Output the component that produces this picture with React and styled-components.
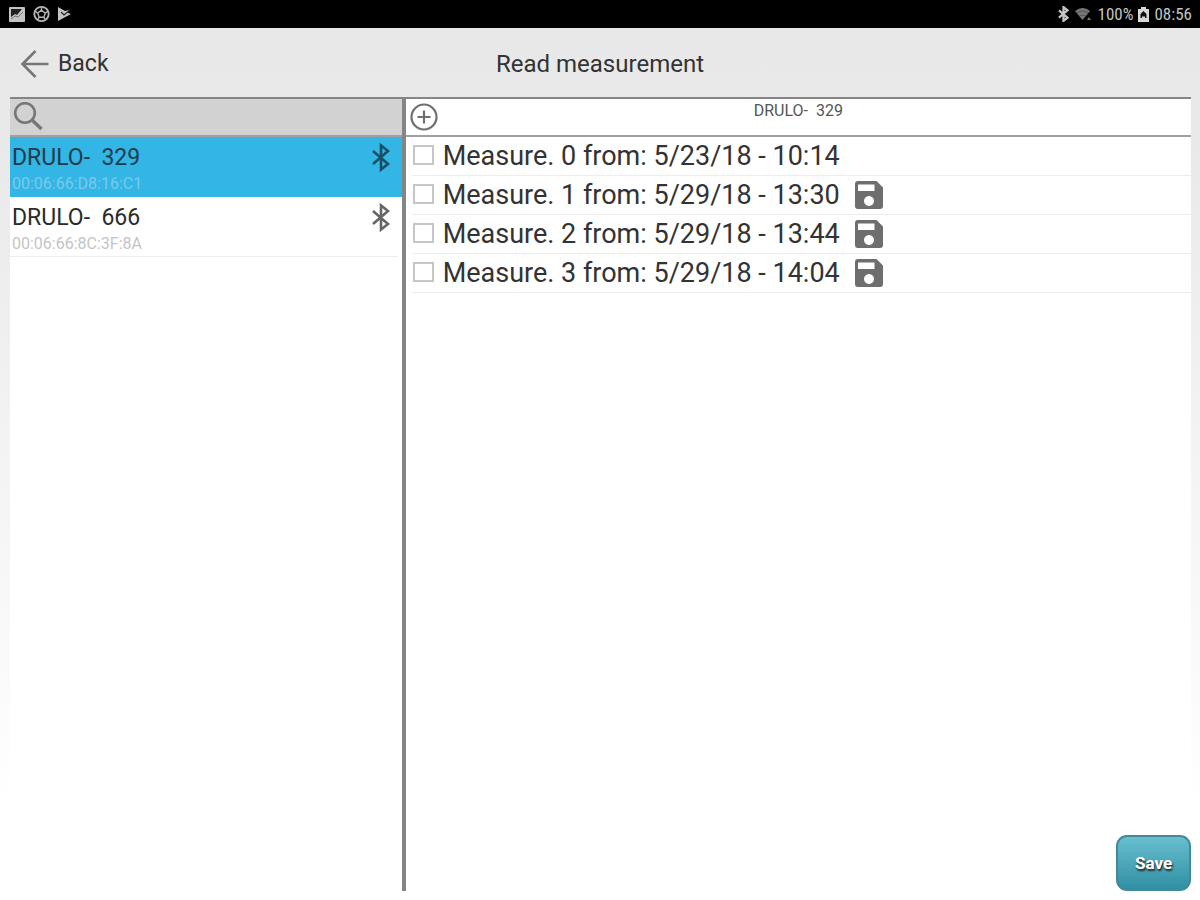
import React, { useState } from 'react';
import styled, { createGlobalStyle, css } from 'styled-components';

const GlobalStyle = createGlobalStyle`
  * {
    box-sizing: border-box;
  }

  body {
    margin: 0;
    font-family: Roboto, sans-serif;
    color: #333;
  }

  button,
  input {
    font-family: inherit;
  }
`;

const Screen = styled.div`
  display: flex;
  flex-direction: column;
  min-height: 100vh;
  background: linear-gradient(#e8e8e8 0, #e9e9e9 15%, #fff 90%);
`;

const StatusBar = styled.div`
  display: flex;
  justify-content: space-between;
  align-items: center;
  height: 28px;
  padding: 0 8px;
  background: #000;
  color: #c4c4c4;
`;

const StatusGroup = styled.div`
  display: flex;
  align-items: center;
  gap: ${props => props.$gap}px;
`;

const StatusText = styled.span`
  font-family: 'Roboto Condensed', Roboto, sans-serif;
  font-size: 17px;
  line-height: 28px;
`;

const Header = styled.header`
  display: grid;
  grid-template-columns: 1fr auto 1fr;
  align-items: center;
  height: 69px;
  padding: 2px 20px 0;
`;

const plainButton = css`
  padding: 0;
  border: 0;
  background: none;
  color: inherit;
  cursor: pointer;
`;

const BackButton = styled.button`
  ${plainButton};
  display: flex;
  align-items: center;
  gap: 9px;
  justify-self: start;
  font-size: 23px;
  line-height: 32px;
`;

const Title = styled.h1`
  margin: 0;
  font-size: 24px;
  font-weight: 400;
  line-height: 32px;
`;

const Panels = styled.main`
  display: flex;
  flex: 1;
  margin: 0 9px 9px 10px;
  background: #fff;
`;

const Devices = styled.section`
  flex: 0 0 calc(33.33% + 2px);
  border-right: 4px solid #858585;
`;

const Measurements = styled.section`
  display: flex;
  flex: 1;
  flex-direction: column;
`;

const bar = css`
  display: flex;
  height: 40px;
  border-top: 2px solid #858585;
  border-bottom: 2px solid #a0a0a0;
`;

const SearchBar = styled.label`
  ${bar};
  align-items: center;
  padding-left: 3px;
  background: #d2d2d2;
`;

const SearchInput = styled.input`
  flex: 1;
  min-width: 0;
  height: 32px;
  border: 0;
  outline: 0;
  background: transparent;
  font-size: 20px;
`;

const MeasureBar = styled.div`
  ${bar};
  padding-left: 4px;
`;

const AddButton = styled.button`
  ${plainButton};
  display: flex;
  align-items: center;
`;

const DeviceTitle = styled.h2`
  flex: 1;
  margin: 0;
  padding-right: 32px;
  color: #555;
  font-size: 16px;
  font-weight: 400;
  line-height: 23px;
  text-align: center;
  white-space: pre;
`;

const List = styled.ul`
  margin: 0;
  padding: 0;
  list-style: none;
`;

const DeviceItem = styled.li`
  margin-right: ${props => (props.$selected ? 0 : 4)}px;
  border-bottom: 1px solid ${props => (props.$selected ? '#33b5e5' : '#ececec')};
  background: ${props => (props.$selected ? '#33b5e5' : '#fff')};
`;

const DeviceButton = styled.button`
  ${plainButton};
  display: flex;
  justify-content: space-between;
  align-items: flex-start;
  width: 100%;
  height: 59px;
  padding: 5px ${props => (props.$selected ? 12 : 8)}px 0 2px;
  text-align: left;
  color: ${props => (props.$selected ? '#174f65' : '#666')};
`;

const DeviceName = styled.span`
  display: block;
  color: ${props => (props.$selected ? '#1d3d4b' : '#2b2b2b')};
  font-size: 23px;
  line-height: 31px;
  white-space: pre;
`;

const DeviceAddress = styled.span`
  display: block;
  color: ${props => (props.$selected ? '#7acbea' : '#c4c4c4')};
  font-size: 16px;
  line-height: 22px;
`;

const MeasureItem = styled.li`
  display: flex;
  align-items: center;
  gap: 15px;
  height: 39px;
  margin-left: 6px;
  border-bottom: 1px solid #ececec;
`;

const MeasureLabel = styled.label`
  display: flex;
  align-items: center;
  gap: 9px;
  font-size: 27px;
  line-height: 36px;
`;

const Checkbox = styled.input`
  appearance: none;
  width: 21px;
  height: 20px;
  margin: 0 0 2px 1px;
  border: 2px solid #c6c6c6;
  background: #fff;

  &:checked {
    background: #33b5e5;
  }
`;

const SaveButton = styled.button`
  align-self: flex-end;
  width: 75px;
  height: 56px;
  margin-top: auto;
  padding: 0;
  border: 2px solid #43899a;
  border-radius: 11px;
  background: linear-gradient(#67bfd0, #318fa3);
  color: #fff;
  font-size: 17px;
  font-weight: 700;
  text-shadow: 1px 2px 2px #222;
  cursor: pointer;
`;

const PictureIcon = () => (
  <svg width="18" height="17" viewBox="0 0 18 17" aria-hidden="true">
    <rect x="1" y="1" width="16" height="15" rx="1" fill="#c4c4c4" />
    <path d="M3 3h11L9 9 7 8l-4 3z" fill="#222" />
    <path d="M3 13l4-3 3 1 5-5" fill="none" stroke="#777" />
  </svg>
);

const BallIcon = () => (
  <svg width="17" height="18" viewBox="0 0 18 18" fill="none" stroke="#b4b4b4" aria-hidden="true">
    <circle cx="9" cy="9" r="7.600" strokeWidth="2" />
    <path d="M9 5l4 3-1.500 4.500h-5L5 8z" strokeWidth="1.500" />
    <path d="M9 5V2M13 8l3-2M11.500 12.500l2 3M6.500 12.500l-2 3M5 8L2 6" strokeWidth="1.500" />
  </svg>
);

const PlayIcon = () => (
  <svg width="15" height="16" viewBox="0 0 15 16" aria-hidden="true">
    <path d="M1 1l7 4 4-1-1 3 3 1L1 15z" fill="#c4c4c4" />
    <path d="M4 6l3 3 6-5" fill="none" stroke="#222" strokeWidth="1.200" />
  </svg>
);

const BluetoothIcon = ({ width, height, weight = 2.6 }) => (
  <svg width={width} height={height} viewBox="0 0 18 28" fill="none" stroke="currentColor" strokeWidth={weight} aria-hidden="true">
    <path d="M1 7.500L16 20.500L9 26V2L16 7.500L1 20.500" />
  </svg>
);

const WifiIcon = () => (
  <svg width="19" height="16" viewBox="0 0 19 16" aria-hidden="true">
    <path d="M1 5Q8.500-1 16 5L8.500 14z" fill="#777" />
    <path d="M3 7Q8.500 3 14 7M5.500 10Q8.500 8 11.500 10" fill="none" stroke="#444" strokeWidth="0.800" />
    <path d="M13 14l2-3 2 3z" fill="#777" />
  </svg>
);

const BatteryIcon = () => (
  <svg width="11" height="15" viewBox="0 0 11 15" aria-hidden="true">
    <path d="M3 0h5v2h3v13H0V2h3z" fill="#d8d8d8" />
    <path d="M5.500 4L8.500 7v4H7V9.500H4V11H2.500V7z" fill="#111" />
  </svg>
);

const ArrowIcon = () => (
  <svg width="29" height="28" viewBox="0 0 29 28" fill="none" stroke="#777" strokeWidth="2.600" aria-hidden="true">
    <path d="M15.500 1L2.500 14l13 13M2.500 14H28.500" />
  </svg>
);

const SearchIcon = () => (
  <svg width="30" height="30" viewBox="0 0 30 30" fill="none" stroke="#777" aria-hidden="true">
    <circle cx="12" cy="11" r="9.800" strokeWidth="2.600" />
    <path d="M19 18l9.500 9" strokeWidth="3.400" />
  </svg>
);

const AddIcon = () => (
  <svg width="28" height="28" viewBox="0 0 28 28" fill="none" stroke="#707070" strokeWidth="2.200" aria-hidden="true">
    <circle cx="14" cy="14" r="12.500" />
    <path d="M14 7.500v13M7.500 14h13" />
  </svg>
);

const DiskIcon = () => (
  <svg width="28" height="28" viewBox="0 0 28 28" aria-hidden="true">
    <path
      fillRule="evenodd"
      fill="#6e6e6e"
      d="M3 0h18.500L28 6.500V25q0 3-3 3H3q-3 0-3-3V3q0-3 3-3zM3 3.500v6.500h16.500v-6.500zM14 15a5 5 0 1 0 .01 0z"
    />
  </svg>
);

const devices = [
  { name: 'DRULO-  329', address: '00:06:66:D8:16:C1' },
  { name: 'DRULO-  666', address: '00:06:66:8C:3F:8A' }
];

const measurements = [
  { text: 'Measure. 0 from: 5/23/18 - 10:14', saved: false },
  { text: 'Measure. 1 from: 5/29/18 - 13:30', saved: true },
  { text: 'Measure. 2 from: 5/29/18 - 13:44', saved: true },
  { text: 'Measure. 3 from: 5/29/18 - 14:04', saved: true }
];

export default function App() {
  const [selected, setSelected] = useState(0);

  return (
    <Screen>
      <GlobalStyle />
      <StatusBar>
        <StatusGroup $gap={7}>
          <PictureIcon />
          <BallIcon />
          <PlayIcon />
        </StatusGroup>
        <StatusGroup $gap={5}>
          <BluetoothIcon width={11} height={16} weight={4} />
          <WifiIcon />
          <StatusText>100%</StatusText>
          <BatteryIcon />
          <StatusText>08:56</StatusText>
        </StatusGroup>
      </StatusBar>

      <Header>
        <BackButton type="button">
          <ArrowIcon />
          Back
        </BackButton>
        <Title>Read measurement</Title>
      </Header>

      <Panels>
        <Devices>
          <SearchBar>
            <SearchIcon />
            <SearchInput type="text" aria-label="Search" />
          </SearchBar>
          <List>
            {devices.map((device, i) => (
              <DeviceItem key={device.address} $selected={i === selected}>
                <DeviceButton type="button" $selected={i === selected} onClick={() => setSelected(i)}>
                  <span>
                    <DeviceName $selected={i === selected}>{device.name}</DeviceName>
                    <DeviceAddress $selected={i === selected}>{device.address}</DeviceAddress>
                  </span>
                  <BluetoothIcon width={18} height={31} />
                </DeviceButton>
              </DeviceItem>
            ))}
          </List>
        </Devices>

        <Measurements>
          <MeasureBar>
            <AddButton type="button" aria-label="Add">
              <AddIcon />
            </AddButton>
            <DeviceTitle>{devices[selected].name}</DeviceTitle>
          </MeasureBar>
          <List>
            {measurements.map(({ text, saved }) => (
              <MeasureItem key={text}>
                <MeasureLabel>
                  <Checkbox type="checkbox" />
                  {text}
                </MeasureLabel>
                {saved && <DiskIcon />}
              </MeasureItem>
            ))}
          </List>
          <SaveButton type="button">Save</SaveButton>
        </Measurements>
      </Panels>
    </Screen>
  );
}
